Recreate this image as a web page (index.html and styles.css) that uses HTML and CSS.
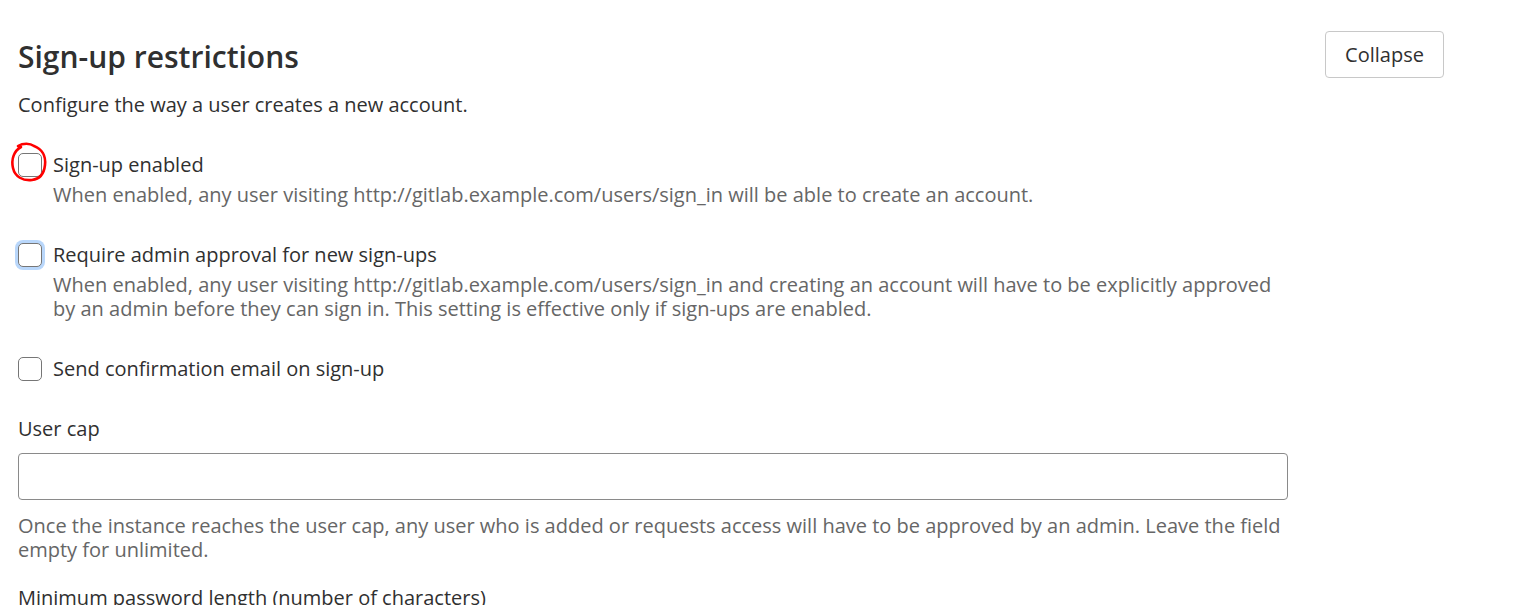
FILE: index.html
```html
<!DOCTYPE html>
<html lang="en">
<head>
    <meta charset="UTF-8">
    <meta name="viewport" content="width=device-width, initial-scale=1.0">
    <title>Sign-up restrictions</title>
    <link rel="stylesheet" href="styles.css">
</head>
<body>
    <section class="settings">
        <div class="settings-header">
            <h4>Sign-up restrictions</h4>
            <button type="button" class="btn">Collapse</button>
        </div>
        <p class="intro">Configure the way a user creates a new account.</p>

        <form class="settings-content">
            <div class="form-check annotated">
                <input type="checkbox" id="signup_enabled">
                <div class="check-text">
                    <label for="signup_enabled">Sign-up enabled</label>
                    <p class="help">When enabled, any user visiting http://gitlab.example.com/users/sign_in will be able to create an account.</p>
                </div>
                <!-- hand-drawn mark from the screenshot -->
                <svg class="scribble" width="44" height="48" viewBox="0 0 44 48">
                    <path d="M8 5 C13 2 20 2 24 5 C32 8 36 15 35 24 C34 33 30 38 22 39 C13 40 5 36 3 27 C1 18 4 10 11 6" fill="none" stroke="#ff0000" stroke-width="2.6" stroke-linecap="round"/>
                </svg>
            </div>

            <div class="form-check">
                <input type="checkbox" id="require_admin" class="focused">
                <div class="check-text">
                    <label for="require_admin">Require admin approval for new sign-ups</label>
                    <p class="help">When enabled, any user visiting http://gitlab.example.com/users/sign_in and creating an account will have to be explicitly approved by an admin before they can sign in. This setting is effective only if sign-ups are enabled.</p>
                </div>
            </div>

            <div class="form-check">
                <input type="checkbox" id="send_confirmation">
                <div class="check-text">
                    <label for="send_confirmation">Send confirmation email on sign-up</label>
                </div>
            </div>

            <div class="form-group">
                <label for="user_cap">User cap</label>
                <input type="text" id="user_cap" class="form-control">
                <p class="help">Once the instance reaches the user cap, any user who is added or requests access will have to be approved by an admin. Leave the field empty for unlimited.</p>
            </div>

            <div class="form-group">
                <label for="min_password">Minimum password length (number of characters)</label>
            </div>
        </form>
    </section>
</body>
</html>
```

FILE: styles.css
```css
body {
    margin: 0;
    font-family: "Open Sans", "Noto Sans", Arial, sans-serif;
    font-size: 20px;
    line-height: 24px;
    color: #303030;
    background-color: #fff;
}
.settings {
    width: 1426px;
    padding: 31px 0 0 18px;
}
.settings-header {
    display: flex;
    justify-content: space-between;
    align-items: flex-start;
}
h4 {
    margin: 10px 0 0;
    font-size: 30px;
    line-height: 32px;
    font-weight: 600;
    color: #303030;
}
.btn {
    width: 119px;
    height: 47px;
    background-color: #fff;
    color: #303030;
    border: 1px solid #c8c8c8;
    border-radius: 4px;
    font-family: inherit;
    font-size: 20px;
    cursor: pointer;
}
.intro {
    margin: 15px 0 0;
}
.settings-content {
    width: 1270px;
    margin-top: 36px;
}
.form-check {
    position: relative;
    display: flex;
    align-items: flex-start;
    gap: 11px;
    margin-bottom: 36px;
}
.form-check input[type="checkbox"] {
    appearance: none;
    flex: none;
    width: 24px;
    height: 24px;
    margin: 0;
    border: 1px solid #767676;
    border-radius: 5px;
    background: #fff;
}
.form-check input.focused {
    box-shadow: 0 0 0 3px #b9d7fb;
}
.check-text label {
    display: block;
}
.help {
    margin: 6px 0 0;
    color: #666;
}
.scribble {
    position: absolute;
    left: -8px;
    top: -12px;
    pointer-events: none;
}
.form-group {
    margin-bottom: 24px;
}
.form-group label {
    display: block;
}
.form-control {
    display: block;
    box-sizing: border-box;
    width: 100%;
    height: 47px;
    margin-top: 12px;
    border: 1px solid #8a8a8a;
    border-radius: 4px;
    font-family: inherit;
    font-size: 20px;
}
.form-group .help {
    margin-top: 14px;
}
```
